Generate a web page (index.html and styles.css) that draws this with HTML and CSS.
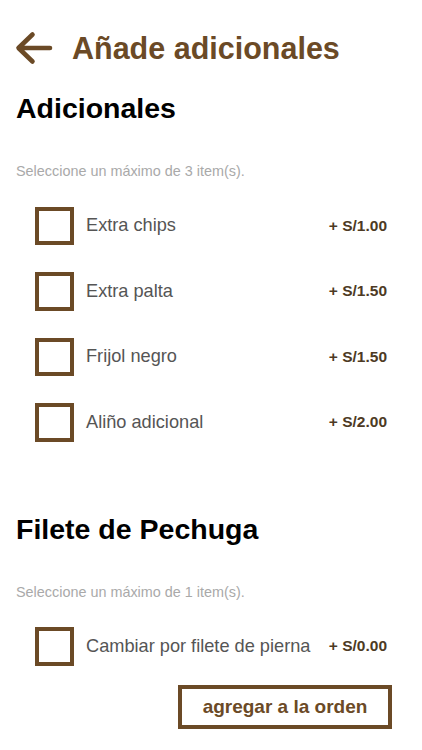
FILE: index.html
```html
<!DOCTYPE html>
<html lang="es">
<head>
<meta charset="utf-8">
<title>Añade adicionales</title>
<link rel="stylesheet" href="styles.css">
</head>
<body>
<div class="page">
  <header class="header">
    <svg class="back" width="38" height="34" viewBox="0 0 38 34" aria-hidden="true">
      <path d="M35 17 H4 M17.5 3.5 L3.5 17 L17.5 30.5" fill="none" stroke="#6b4a26" stroke-width="4.6" stroke-linecap="round" stroke-linejoin="round"/>
    </svg>
    <h1 class="title">Añade adicionales</h1>
  </header>

  <section class="group">
    <h2 class="group-title">Adicionales</h2>
    <p class="hint">Seleccione un máximo de 3 item(s).</p>
    <ul class="options">
      <li class="option"><span class="box"></span><span class="name">Extra chips</span><span class="price">+ S/1.00</span></li>
      <li class="option"><span class="box"></span><span class="name">Extra palta</span><span class="price">+ S/1.50</span></li>
      <li class="option"><span class="box"></span><span class="name">Frijol negro</span><span class="price">+ S/1.50</span></li>
      <li class="option"><span class="box"></span><span class="name">Aliño adicional</span><span class="price">+ S/2.00</span></li>
    </ul>
  </section>

  <section class="group group-second">
    <h2 class="group-title">Filete de Pechuga</h2>
    <p class="hint">Seleccione un máximo de 1 item(s).</p>
    <ul class="options">
      <li class="option"><span class="box"></span><span class="name">Cambiar por filete de pierna</span><span class="price">+ S/0.00</span></li>
    </ul>
  </section>

  <div class="actions">
    <button class="add-btn" type="button">agregar a la orden</button>
  </div>
</div>
</body>
</html>
```

FILE: styles.css
```css
* { box-sizing: border-box; }

html, body {
  margin: 0;
  padding: 0;
  background: #ffffff;
}

body {
  font-family: "Liberation Sans", Arial, sans-serif;
  color: #000;
}

.page {
  width: 422px;
  padding: 28px 16px 0 15px;
}

.header {
  display: flex;
  align-items: center;
  gap: 19px;
  height: 40px;
}

.back {
  display: block;
  flex: none;
}

.title {
  margin: 0;
  font-size: 30.5px;
  line-height: 40px;
  font-weight: bold;
  color: #6b4a26;
}

.group {
  margin-top: 23px;
}

.group-second {
  margin-top: 70px;
}

.group-title {
  margin: 0 0 0 1px;
  font-size: 28.5px;
  line-height: 34px;
  font-weight: bold;
  color: #000;
}

.hint {
  margin: 38px 0 0 1px;
  font-size: 14.4px;
  line-height: 17px;
  color: #a9a9a9;
}

.options {
  list-style: none;
  margin: 26.5px 0 0 0;
  padding: 0 19px 0 20px;
  display: flex;
  flex-direction: column;
  gap: 27px;
}

.option {
  display: flex;
  align-items: center;
  height: 38.5px;
}

.box {
  flex: none;
  width: 39px;
  height: 38.5px;
  border: 4px solid #6b4a26;
  background: #fff;
}

.name {
  flex: 1;
  margin-left: 12px;
  font-size: 18.2px;
  color: #555555;
}

.price {
  flex: none;
  font-size: 15.5px;
  font-weight: bold;
  color: #4d3a24;
}

.actions {
  display: flex;
  justify-content: flex-end;
  margin-top: 19px;
  padding-right: 14px;
}

.add-btn {
  width: 214px;
  height: 44px;
  border: 4px solid #6b4a26;
  background: #fff;
  font-family: "Liberation Sans", Arial, sans-serif;
  font-size: 19px;
  font-weight: bold;
  color: #6b4a26;
  padding: 0;
}
```
